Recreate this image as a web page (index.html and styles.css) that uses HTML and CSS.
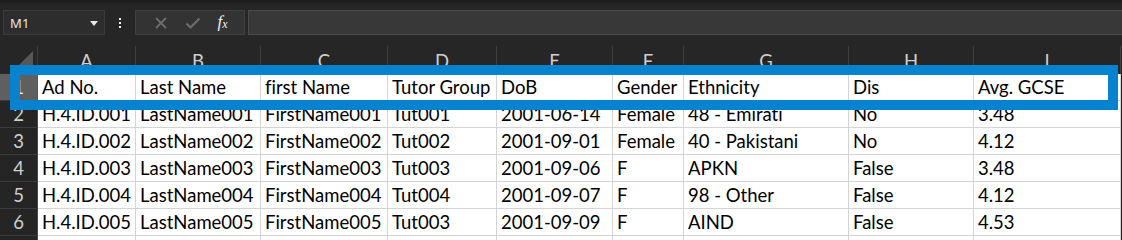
FILE: index.html
```html
<!DOCTYPE html>
<html>
<head>
<meta charset="utf-8">
<link rel="stylesheet" href="styles.css">
</head>
<body>
<div class="app">
  <div class="formula-bar">
    <div class="namebox">
      <span class="namebox-text">M1</span>
      <svg class="caret" width="8" height="5" viewBox="0 0 8 5"><path d="M0 0H8L4 5Z" fill="#e8e8e8"/></svg>
    </div>
    <div class="kebab"><i></i><i></i><i></i></div>
    <div class="fx-buttons">
      <svg class="fx-icon" width="14" height="14" viewBox="0 0 14 14"><path d="M2 2L12 12M12 2L2 12" stroke="#6d6d6d" stroke-width="1.8" fill="none"/></svg>
      <svg class="fx-icon" width="16" height="14" viewBox="0 0 16 14"><path d="M1.5 7.5L5.5 11.5L14.5 2.5" stroke="#6d6d6d" stroke-width="2.2" fill="none"/></svg>
      <span class="fx-label">f<sub>x</sub></span>
    </div>
    <div class="formula-input"></div>
  </div>

  <div class="sheet">
    <div class="corner"><span class="corner-tri"></span></div>
    <div class="colhead">A</div>
    <div class="colhead">B</div>
    <div class="colhead">C</div>
    <div class="colhead">D</div>
    <div class="colhead">E</div>
    <div class="colhead">F</div>
    <div class="colhead">G</div>
    <div class="colhead">H</div>
    <div class="colhead">I</div>

    <div class="rowhead rowhead-sel">1</div>
    <div class="cell">Ad No.</div>
    <div class="cell">Last Name</div>
    <div class="cell">first Name</div>
    <div class="cell">Tutor Group</div>
    <div class="cell">DoB</div>
    <div class="cell">Gender</div>
    <div class="cell">Ethnicity</div>
    <div class="cell">Dis</div>
    <div class="cell">Avg. GCSE</div>

    <div class="rowhead">2</div>
    <div class="cell">H.4.ID.001</div>
    <div class="cell">LastName001</div>
    <div class="cell">FirstName001</div>
    <div class="cell">Tut001</div>
    <div class="cell">2001-06-14</div>
    <div class="cell">Female</div>
    <div class="cell">48 - Emirati</div>
    <div class="cell">No</div>
    <div class="cell">3.48</div>

    <div class="rowhead">3</div>
    <div class="cell">H.4.ID.002</div>
    <div class="cell">LastName002</div>
    <div class="cell">FirstName002</div>
    <div class="cell">Tut002</div>
    <div class="cell">2001-09-01</div>
    <div class="cell">Female</div>
    <div class="cell">40 - Pakistani</div>
    <div class="cell">No</div>
    <div class="cell">4.12</div>

    <div class="rowhead">4</div>
    <div class="cell">H.4.ID.003</div>
    <div class="cell">LastName003</div>
    <div class="cell">FirstName003</div>
    <div class="cell">Tut003</div>
    <div class="cell">2001-09-06</div>
    <div class="cell">F</div>
    <div class="cell">APKN</div>
    <div class="cell">False</div>
    <div class="cell">3.48</div>

    <div class="rowhead">5</div>
    <div class="cell">H.4.ID.004</div>
    <div class="cell">LastName004</div>
    <div class="cell">FirstName004</div>
    <div class="cell">Tut004</div>
    <div class="cell">2001-09-07</div>
    <div class="cell">F</div>
    <div class="cell">98 - Other</div>
    <div class="cell">False</div>
    <div class="cell">4.12</div>

    <div class="rowhead">6</div>
    <div class="cell">H.4.ID.005</div>
    <div class="cell">LastName005</div>
    <div class="cell">FirstName005</div>
    <div class="cell">Tut003</div>
    <div class="cell">2001-09-09</div>
    <div class="cell">F</div>
    <div class="cell">AIND</div>
    <div class="cell">False</div>
    <div class="cell">4.53</div>

    <div class="rowhead"></div>
    <div class="cell"></div>
    <div class="cell"></div>
    <div class="cell"></div>
    <div class="cell"></div>
    <div class="cell"></div>
    <div class="cell"></div>
    <div class="cell"></div>
    <div class="cell"></div>
    <div class="cell"></div>
  </div>

  <div class="highlight"></div>
</div>
</body>
</html>
```

FILE: styles.css
```css
* { box-sizing: border-box; }

html, body {
  margin: 0;
  padding: 0;
  background: #262626;
  overflow: hidden;
}

.app {
  position: relative;
  width: 1122px;
  height: 240px;
  overflow: hidden;
  font-family: Lato, "Noto Sans", sans-serif;
  font-variant-ligatures: none;
  font-feature-settings: "liga" 0, "clig" 0;
}

/* ---------- formula bar ---------- */
.formula-bar {
  height: 46px;
  display: flex;
  align-items: flex-start;
  padding: 10px 0 0 3px;
  background: linear-gradient(#1a1a1a 0px, #242424 4px, #262626 8px);
}

.namebox {
  width: 102px;
  height: 25px;
  background: #2d2d2d;
  border: 1px solid #3b3b3b;
  display: flex;
  align-items: center;
  justify-content: space-between;
  padding: 0 6px 0 6px;
}

.namebox-text {
  font-family: "Noto Sans", "Open Sans", sans-serif;
  font-size: 13px;
  color: #e8e8e8;
  letter-spacing: 0.2px;
}

.caret { margin-top: 1px; }

.kebab {
  width: 30px;
  height: 25px;
  display: flex;
  flex-direction: column;
  align-items: center;
  justify-content: center;
  gap: 2px;
}

.kebab i {
  display: block;
  width: 2px;
  height: 2px;
  background: #f0f0f0;
}

.fx-buttons {
  width: 110px;
  height: 25px;
  background: #333333;
  border: 1px solid #404040;
  display: flex;
  align-items: center;
  justify-content: space-around;
  padding: 0 8px 0 10px;
}

.fx-label {
  font-family: "Liberation Serif", "DejaVu Serif", serif;
  font-style: italic;
  font-size: 17px;
  color: #f2f2f2;
  line-height: 1;
  margin-top: -2px;
}

.fx-label sub {
  font-size: 12px;
  vertical-align: -1px;
}

.formula-input {
  flex: 1;
  height: 25px;
  margin-left: 3px;
  margin-right: -4px;
  background: #383838;
  border: 1px solid #4a4a4a;
}

/* ---------- sheet grid ---------- */
.sheet {
  display: grid;
  grid-template-columns: 38px 98px 125px 127px 109px 116px 71px 165px 125px 147px;
  grid-template-rows: 28px repeat(7, 27px);
}

.corner {
  position: relative;
  background: #262626;
  border-right: 1px solid #3e3e3e;
}

.corner-tri {
  position: absolute;
  right: 4px;
  bottom: 4px;
  width: 0;
  height: 0;
  border-left: 19px solid transparent;
  border-bottom: 19px solid #575757;
}

.colhead {
  background: #262626;
  border-right: 1px solid #3e3e3e;
  color: #cfcfcf;
  font-size: 18.5px;
  line-height: 25px;
  padding-top: 3px;
  text-align: center;
}

.rowhead {
  background: #252525;
  border-right: 1px solid #4a4a4a;
  border-bottom: 1px solid #3c3c3c;
  color: #cfcfcf;
  font-size: 18.5px;
  line-height: 25px;
  padding-top: 1px;
  text-align: center;
}

.rowhead-sel {
  background: #5f5f5f;
  border-right: 1px solid #217346;
  color: #ffffff;
}

.cell {
  background: #ffffff;
  border-right: 1px solid #d4d4d4;
  border-bottom: 1px solid #d4d4d4;
  color: #000000;
  font-size: 18.5px;
  line-height: 25px;
  padding: 1px 2px 0 4px;
  white-space: nowrap;
  overflow: hidden;
}

/* ---------- annotation ---------- */
.highlight {
  position: absolute;
  left: 10px;
  top: 65px;
  width: 1108px;
  height: 45px;
  border: 10px solid #0782cf;
  pointer-events: none;
}
```
